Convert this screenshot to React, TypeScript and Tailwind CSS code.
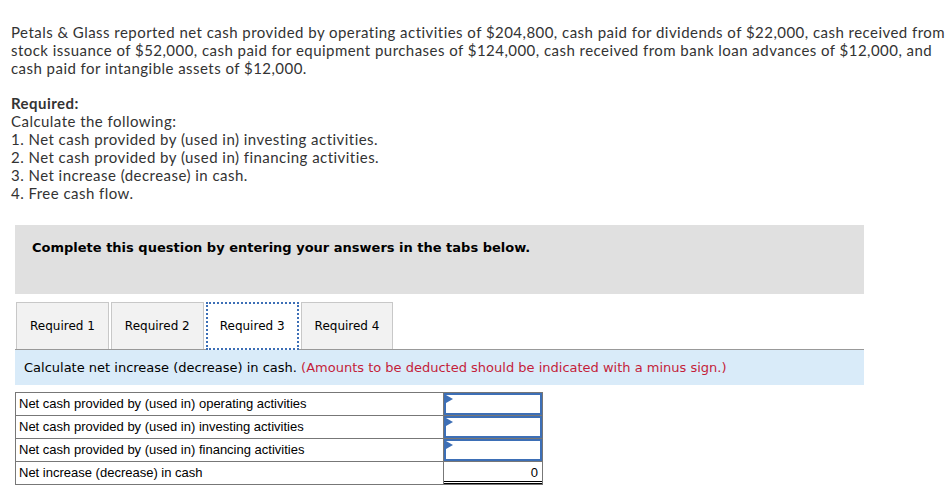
import React from "react";

const ROWS = [
  { label: "Net cash provided by (used in) operating activities", input: true },
  { label: "Net cash provided by (used in) investing activities", input: true },
  { label: "Net cash provided by (used in) financing activities", input: true },
  { label: "Net increase (decrease) in cash", input: false, value: "0" },
];

const TABS = ["Required 1", "Required 2", "Required 3", "Required 4"];

function InputCell() {
  return (
    <td className="relative w-[99px] p-0 border border-[#777]">
      <div className="h-[22px] border-2 border-[#3d6fb6] bg-white" />
      <span className="absolute left-[2px] top-[2px] w-0 h-0 border-t-[4px] border-b-[4px] border-l-[7px] border-t-transparent border-b-transparent border-l-[#3d6fb6]" />
    </td>
  );
}

export default function App() {
  const active = 2;
  return (
    <div className="w-[949px] h-[492px] bg-white overflow-hidden">
      <div className="pl-[11px] pt-[23px] text-[15px] leading-[18px] tracking-[0.46px] text-[#333]" style={{ fontFamily: '"Lato", "Open Sans", sans-serif' }}>
        <p>
          Petals &amp; Glass reported net cash provided by operating activities of $204,800, cash paid for dividends of $22,000, cash received from<br />
          stock issuance of $52,000, cash paid for equipment purchases of $124,000, cash received from bank loan advances of $12,000, and<br />
          cash paid for intangible assets of $12,000.
        </p>
        <p className="mt-[17px] font-bold">Required:</p>
        <p>Calculate the following:</p>
        <p>1. Net cash provided by (used in) investing activities.</p>
        <p>2. Net cash provided by (used in) financing activities.</p>
        <p>3. Net increase (decrease) in cash.</p>
        <p>4. Free cash flow.</p>
      </div>

      <div className="ml-[15px] mt-[23px] w-[849px]" style={{ fontFamily: '"DejaVu Sans", Verdana, sans-serif' }}>
        <div className="h-[69px] bg-[#e0e0e0] pl-[17px] pt-[13px] text-[13px] font-bold text-black">
          Complete this question by entering your answers in the tabs below.
        </div>

        <div className="mt-[8px] flex gap-[2px] pl-[1px] border-b border-[#999]">
          {TABS.map((t, i) => (
            <div
              key={t}
              className={
                i === active
                  ? "h-[48px] -mb-px px-[12px] flex items-center bg-white border-2 border-dotted border-[#3d6fb6] text-[12px] text-black"
                  : "h-[47px] px-[13px] flex items-center bg-[#f2f2f2] border border-b-0 border-[#c8c8c8] text-[12px] text-black"
              }
            >
              {t}
            </div>
          ))}
        </div>

        <div className="h-[35px] bg-[#d9ebf9] pl-[9px] flex items-center text-[13px] text-black">
          Calculate net increase (decrease) in cash.&nbsp;
          <span className="text-[#c41e3a]">(Amounts to be deducted should be indicated with a minus sign.)</span>
        </div>

        <table className="mt-[7px] border-collapse text-[13px] text-black" style={{ fontFamily: '"Liberation Sans", Arial, sans-serif' }}>
          <tbody>
            {ROWS.map((r) => (
              <tr key={r.label} className="h-[23px]">
                <td className="w-[428px] border border-[#777] pl-[3px] leading-[22px]">{r.label}</td>
                {r.input ? (
                  <InputCell />
                ) : (
                  <td className="w-[99px] border border-[#777] border-t-black p-0">
                    <div className="h-[22px] pr-[4px] text-right leading-[22px] border-b-[3px] border-double border-black">{r.value}</div>
                  </td>
                )}
              </tr>
            ))}
          </tbody>
        </table>
      </div>
    </div>
  );
}
